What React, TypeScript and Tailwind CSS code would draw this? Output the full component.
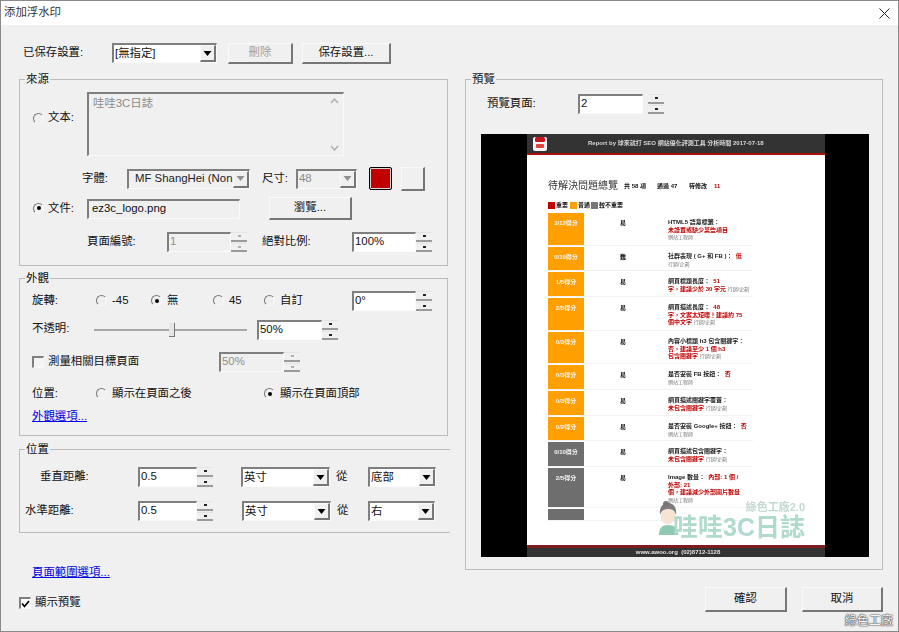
import type { ReactNode } from 'react';

const sunken = 'border-t-2 border-l-2 border-b border-r border-t-[#7f7f7f] border-l-[#7f7f7f] border-b-[#fafafa] border-r-[#fafafa]';
const raised = 'border-t border-l border-b-2 border-r-2 border-t-[#fafafa] border-l-[#fafafa] border-b-[#767676] border-r-[#767676]';

function Arrow({ disabled }: { disabled?: boolean }) {
  return (
    <span className={`flex w-[16px] shrink-0 items-center justify-center self-stretch bg-[#f0f0f0] ${raised}`}>
      <svg width="9" height="5" viewBox="0 0 9 5">
        <path d="M0.5 0h8L4.5 5z" fill={disabled ? '#8f8f8f' : '#000'} />
      </svg>
    </span>
  );
}

function Combo({ value, className, disabled }: { value: string; className: string; disabled?: boolean }) {
  return (
    <div className={`flex h-[20px] shrink-0 items-center overflow-hidden ${sunken} ${disabled ? 'bg-[#f0f0f0]' : 'bg-white'} ${className}`}>
      <span className={`min-w-0 flex-1 overflow-hidden whitespace-nowrap pl-[1px] ${disabled ? 'text-[#8a8a8a]' : ''}`}>{value}</span>
      <Arrow disabled={disabled} />
    </div>
  );
}

function Spinner({ disabled }: { disabled?: boolean }) {
  const tone = disabled ? 'bg-[#b0b0b0]' : 'bg-[#222]';
  return (
    <div className="flex h-[20px] w-[16px] shrink-0 flex-col gap-[1px]">
      <span className="flex flex-1 items-center justify-center border-t border-b-2 border-t-[#e4e4e4] border-b-[#9a9a9a] bg-[#f0f0f0]">
        <i className={`block h-[2px] w-[3px] ${tone}`} />
      </span>
      <span className="flex flex-1 items-center justify-center border-t border-b-2 border-t-[#e4e4e4] border-b-[#9a9a9a] bg-[#f0f0f0]">
        <i className={`block h-[2px] w-[3px] ${tone}`} />
      </span>
    </div>
  );
}

function Spin({ value, className, disabled }: { value: string; className: string; disabled?: boolean }) {
  return (
    <div className={`flex h-[20px] shrink-0 ${className}`}>
      <div className={`min-w-0 flex-1 pl-[1px] leading-[15px] ${sunken} ${disabled ? 'bg-[#f0f0f0] text-[#8f8f8f]' : 'bg-white'}`}>{value}</div>
      <Spinner disabled={disabled} />
    </div>
  );
}

function Btn({ children, className, disabled }: { children: ReactNode; className: string; disabled?: boolean }) {
  return (
    <div className={`flex shrink-0 items-center justify-center bg-[#f0f0f0] ${raised} ${disabled ? 'text-[#a0a0a0]' : ''} ${className}`}>
      {children}
    </div>
  );
}

function Radio({ checked }: { checked?: boolean }) {
  return (
    <span className="flex h-[11px] w-[11px] shrink-0 items-center justify-center rounded-full border border-t-[#777] border-l-[#777] border-b-[#f8f8f8] border-r-[#f8f8f8]">
      {checked && <i className="block h-[4px] w-[4px] rounded-full bg-black" />}
    </span>
  );
}

function Check({ checked }: { checked?: boolean }) {
  return (
    <span className={`flex h-[12px] w-[12px] shrink-0 items-center justify-center ${sunken} ${checked ? 'bg-white' : 'bg-[#f4f4f4]'}`}>
      {checked && (
        <svg width="9" height="8" viewBox="0 0 9 8">
          <path d="M1 3.5l2.5 3L8 1" fill="none" stroke="#000" strokeWidth="1.7" />
        </svg>
      )}
    </span>
  );
}

function Group({ title, className, children }: { title: string; className: string; children: ReactNode }) {
  return (
    <section className={`relative border border-[#bcbcbc] ${className}`}>
      <span className="absolute -top-[8px] left-[5px] bg-[#f0f0f0] px-[1px] leading-[14px]">{title}</span>
      {children}
    </section>
  );
}

type PreviewRow = {
  score: string;
  level: string;
  tone: string;
  height: string;
  lines: ReactNode[];
};

const Red = ({ children }: { children: ReactNode }) => <span className="text-[#c00000]">{children}</span>;
const Role = ({ children }: { children: ReactNode }) => <span className="text-[5px] font-normal text-[#777]">{children}</span>;

const previewRows: PreviewRow[] = [
  { score: '3/12得分', level: '易', tone: 'bg-[#ffa000]', height: 'h-[33px]', lines: ['HTML5 語意標籤：', <Red>未設置或缺少某些項目</Red>, <Role>網站工程師</Role>] },
  { score: '0/10得分', level: '難', tone: 'bg-[#ffa000]', height: 'h-[24px]', lines: [<>社群表現 ( G+ 和 FB )： <Red>&nbsp;低</Red></>, <Role>行銷/企劃</Role>] },
  { score: '1/5得分', level: '易', tone: 'bg-[#ffa000]', height: 'h-[25px]', lines: [<>網頁標題長度： <Red>&nbsp;51</Red></>, <><Red>字，建議少於 30 字元</Red> <Role>行銷/企劃</Role></>] },
  { score: '2/5得分', level: '易', tone: 'bg-[#ffa000]', height: 'h-[33px]', lines: [<>網頁描述長度： <Red>&nbsp;48</Red></>, <Red>字，文案太短嘍！建議約 75</Red>, <><Red>個中文字</Red> <Role>行銷/企劃</Role></>] },
  { score: '0/3得分', level: '易', tone: 'bg-[#ffa000]', height: 'h-[32px]', lines: ['內容小標題 h3 包含關鍵字：', <Red>否，建議至少 1 個 h3</Red>, <><Red>包含關鍵字</Red> <Role>行銷/企劃</Role></>] },
  { score: '0/3得分', level: '易', tone: 'bg-[#ffa000]', height: 'h-[25px]', lines: [<>是否安裝 FB 按鈕： <Red>&nbsp;否</Red></>, <Role>網站工程師</Role>] },
  { score: '0/3得分', level: '易', tone: 'bg-[#ffa000]', height: 'h-[25px]', lines: ['網頁描述關鍵字覆蓋：', <><Red>未包含關鍵字</Red> <Role>行銷/企劃</Role></>] },
  { score: '0/2得分', level: '易', tone: 'bg-[#ffa000]', height: 'h-[24px]', lines: [<>是否安裝 Google+ 按鈕： <Red>&nbsp;否</Red></>, <Role>網站工程師</Role>] },
  { score: '0/10得分', level: '易', tone: 'bg-[#6e6e6e]', height: 'h-[25px]', lines: ['網頁描述包含關鍵字：', <><Red>未包含關鍵字</Red> <Role>行銷/企劃</Role></>] },
  { score: '2/5得分', level: '易', tone: 'bg-[#6e6e6e]', height: 'h-[40px]', lines: [<>Image 數量： <Red>&nbsp;內部: 1 個 /</Red></>, <Red>外部: 21</Red>, <Red>個，建議減少外部圖片數量</Red>, <Role>網站工程師</Role>] },
  { score: '', level: '', tone: 'bg-[#6e6e6e]', height: 'h-[12px]', lines: [] },
];

function PreviewPage() {
  return (
    <div className="relative ml-[46px] flex h-full w-[298px] flex-col bg-white [filter:blur(0.3px)]">
      <div className="flex h-[21px] shrink-0 items-center border-b-2 border-b-[#a80f0f] bg-[#333] pl-[6px]">
        <svg width="14" height="14" viewBox="0 0 14 14" className="shrink-0">
          <rect width="14" height="14" rx="2" fill="#f4f4f4" />
          <rect x="2" y="0" width="10" height="5" rx="1.5" fill="#c8141c" />
          <rect x="3" y="7" width="8" height="4" rx="1" fill="#e8403c" />
        </svg>
        <span className="ml-[41px] whitespace-nowrap text-[6px] font-bold text-[#d8d8d8]">
          Report by 球來就打 SEO 網站優化評測工具 分析時間 2017-07-18
        </span>
      </div>

      <div className="ml-[21px] mt-[23px] flex h-[16px] items-center whitespace-nowrap">
        <span className="text-[10px] leading-none text-[#333]">待解決問題總覽</span>
        <span className="ml-[6px] w-[33px] text-[6px] font-bold">共 58 項</span>
        <span className="w-[32px] text-[6px] font-bold">通過 47</span>
        <span className="text-[6px] font-bold">待修改</span>
        <span className="ml-[7px] text-[6px] font-bold text-[#c00000]">11</span>
      </div>

      <div className="ml-[21px] mt-[7px] flex h-[8px] items-center whitespace-nowrap text-[6px] font-bold leading-none">
        <i className="h-[7px] w-[7px] bg-[#c00000]" />
        <span className="ml-[1px] w-[14px]">重要</span>
        <i className="h-[7px] w-[7px] bg-[#ffa000]" />
        <span className="ml-[1px] w-[13px]">普通</span>
        <i className="h-[7px] w-[7px] bg-[#777]" />
        <span className="ml-[1px]">較不重要</span>
      </div>

      <div className="ml-[21px] mt-[4px] flex w-[205px] flex-col gap-[1px]">
        {previewRows.map((row, i) => (
          <div key={i} className={`flex shrink-0 border-b border-b-[#f2f2f2] text-[6px] leading-[7.5px] ${row.height}`}>
            <div className={`w-[36px] shrink-0 pt-[7px] text-center font-bold text-[#f4f4f4] ${row.tone}`}>{row.score}</div>
            <div className="w-[84px] shrink-0 pl-[36px] pt-[7px] font-bold">{row.level}</div>
            <div className="min-w-0 flex-1 whitespace-nowrap pt-[6px] font-bold text-[#222]">
              {row.lines.map((line, j) => (
                <div key={j}>{line}</div>
              ))}
            </div>
          </div>
        ))}
      </div>

      <div className="mt-auto flex h-[12px] shrink-0 items-center justify-center border-t-[3px] border-t-[#7c1c1c] bg-[#333] pl-[4px] text-[6px] font-bold text-[#e0e0e0]">
        www.awoo.org &nbsp;(02)8712-1128
      </div>

      {/* watermark sits over the page */}
      <div className="absolute left-[130px] top-[367px] flex w-[150px] items-end">
        <svg width="23" height="35" viewBox="0 0 23 35" className="shrink-0">
          <path d="M2 34c0-7 3-10 9-10s10 3 10 10z" fill="#8fc9b4" />
          <ellipse cx="11" cy="15" rx="7.5" ry="8" fill="#f7e3d2" />
          <path d="M3 14C2 6 6 2 11 2c5 0 9 4 8 12-1-4-3-6-8-6-4 0-7 2-8 6z" fill="#7d7d7d" />
          <circle cx="9" cy="3" r="3" fill="#777" />
        </svg>
      </div>
      <div className="absolute left-[157px] top-[368px] flex w-[121px] flex-col items-end whitespace-nowrap leading-none">
        <span className="text-[11px] font-bold text-[#c4d9d0]">綠色工廠2.0</span>
        <span className="mt-[2px] text-[25px] font-bold text-[#b0dacb]">哇哇3C日誌</span>
      </div>
    </div>
  );
}

export default function App() {
  return (
    <div className="relative flex h-[632px] w-[899px] flex-col overflow-hidden border border-[#8a8a8a] bg-[#f0f0f0] font-['Liberation_Sans','Noto_Sans_CJK_TC',sans-serif] text-[11.4px] text-[#111]">
      <header className="flex h-[24px] shrink-0 items-center justify-between bg-white pl-[3px] pr-[8px]">
        <span className="text-[#333]">添加浮水印</span>
        <svg width="11" height="11" viewBox="0 0 11 11">
          <path d="M0.5 0.5l10 10M10.5 0.5l-10 10" stroke="#222" strokeWidth="1" />
        </svg>
      </header>

      <main className="flex min-h-0 flex-1">
        <div className="ml-[18px] w-[431px] shrink-0">
          <div className="mt-[18px] flex h-[20px] items-center">
            <span className="ml-[4px] w-[89px]">已保存設置:</span>
            <Combo value="[無指定]" className="w-[105px]" />
            <Btn disabled className="ml-[11px] h-[21px] w-[65px]">刪除</Btn>
            <Btn className="ml-[9px] h-[21px] w-[89px]">保存設置...</Btn>
          </div>

          <Group title="來源" className="mt-[16px] h-[187px] w-[429px]">
            <div className="mt-[12px] flex h-[64px] items-start pl-[13px]">
              <div className="mt-[18px] flex h-[16px] w-[54px] items-center">
                <Radio />
                <span className="ml-[4px]">文本:</span>
              </div>
              <div className={`relative h-[64px] w-[257px] bg-[#f0f0f0] pl-[4px] pt-[1px] text-[#8a8a8a] ${sunken}`}>
                哇哇3C日誌
                <div className="absolute bottom-[4px] right-[1px] top-[4px] flex w-[15px] flex-col items-center justify-between">
                  <svg width="9" height="6" viewBox="0 0 9 6"><path d="M1 5l3.5-4L8 5" fill="none" stroke="#b0b0b0" strokeWidth="1.5" /></svg>
                  <svg width="9" height="6" viewBox="0 0 9 6"><path d="M1 1l3.5 4L8 1" fill="none" stroke="#b0b0b0" strokeWidth="1.5" /></svg>
                </div>
              </div>
            </div>

            <div className="mt-[11px] flex h-[23px] items-center pl-[62px]">
              <span className="w-[45px]">字體:</span>
              <Combo disabled value="MF ShangHei (Non" className="w-[123px] pl-[5px] [&>span]:text-[#222]" />
              <span className="ml-[12px] w-[34px]">尺寸:</span>
              <Combo disabled value="48" className="w-[61px]" />
              <div className="ml-[12px] h-[23px] w-[23px] rounded-[2px] border border-black bg-[#c00000] shadow-[inset_0_0_0_1px_#d8d8d8]" />
              <Btn className="ml-[9px] h-[24px] w-[24px]">{''}</Btn>
            </div>

            <div className="mt-[7px] flex h-[23px] items-center pl-[13px]">
              <div className="flex w-[54px] items-center">
                <Radio checked />
                <span className="ml-[4px]">文件:</span>
              </div>
              <div className={`h-[20px] w-[153px] pl-[3px] leading-[15px] ${sunken}`}>ez3c_logo.png</div>
              <Btn className="ml-[29px] h-[23px] w-[83px]">瀏覽...</Btn>
            </div>

            <div className="mt-[12px] flex h-[20px] items-center pl-[67px]">
              <span className="w-[80px]">頁面編號:</span>
              <Spin disabled value="1" className="w-[80px]" />
              <span className="ml-[15px] w-[90px]">絕對比例:</span>
              <Spin value="100%" className="w-[80px]" />
            </div>
          </Group>

          <Group title="外觀" className="mt-[12px] h-[158px] w-[429px]">
            <div className="mt-[12px] flex h-[20px] items-center pl-[12px]">
              <span className="w-[64px]">旋轉:</span>
              <div className="flex w-[55px] items-center"><Radio /><span className="ml-[5px]">-45</span></div>
              <div className="flex w-[62px] items-center"><Radio checked /><span className="ml-[5px]">無</span></div>
              <div className="flex w-[51px] items-center"><Radio /><span className="ml-[5px]">45</span></div>
              <div className="flex w-[88px] items-center"><Radio /><span className="ml-[5px]">自訂</span></div>
              <Spin value="0°" className="w-[80px]" />
            </div>

            <div className="mt-[9px] flex h-[20px] items-center pl-[12px]">
              <span className="w-[62px] self-start">不透明:</span>
              <div className="relative flex h-[16px] w-[153px] items-center">
                <i className="block h-[2px] w-full bg-[#a8a8a8]" />
                <i className="absolute left-[75px] top-[1px] block h-[14px] w-[6px] border-b border-r border-b-[#777] border-r-[#777] bg-[#e6e6e6]" />
              </div>
              <Spin value="50%" className="ml-[10px] w-[81px]" />
            </div>

            <div className="mt-[12px] flex h-[20px] items-center pl-[12px]">
              <Check />
              <span className="ml-[4px] w-[171px]">測量相關目標頁面</span>
              <Spin disabled value="50%" className="w-[81px]" />
            </div>

            <div className="mt-[13px] flex h-[18px] items-center pl-[12px]">
              <span className="w-[64px]">位置:</span>
              <div className="flex w-[168px] items-center"><Radio /><span className="ml-[5px]">顯示在頁面之後</span></div>
              <div className="flex items-center"><Radio checked /><span className="ml-[5px]">顯示在頁面頂部</span></div>
            </div>

            <div className="mt-[5px] h-[16px] pl-[12px] leading-[16px] text-[#0000e0] underline">外觀選項...</div>
          </Group>

          <Group title="位置" className="mt-[13px] h-[84px] w-[431px] border-r-0">
            <div className="mt-[17px] flex h-[20px] items-center pl-[20px]">
              <span className="w-[98px]">垂直距離:</span>
              <Spin value="0.5" className="w-[75px]" />
              <Combo value="英寸" className="ml-[28px] w-[89px]" />
              <span className="ml-[6px] w-[32px]">從</span>
              <Combo value="底部" className="w-[68px]" />
            </div>
            <div className="mt-[14px] flex h-[20px] items-center pl-[5px]">
              <span className="w-[113px]">水準距離:</span>
              <Spin value="0.5" className="w-[75px]" />
              <Combo value="英寸" className="ml-[29px] w-[89px]" />
              <span className="ml-[6px] w-[31px]">從</span>
              <Combo value="右" className="w-[67px]" />
            </div>
          </Group>

          <div className="ml-[13px] mt-[31px] h-[16px] leading-[16px] text-[#0000e0] underline">頁面範圍選項...</div>

          <div className="mt-[15px] flex h-[16px] items-center">
            <Check checked />
            <span className="ml-[4px]">顯示預覽</span>
          </div>
        </div>

        <div className="ml-[15px] w-[418px] shrink-0">
          <Group title="預覽" className="mt-[54px] h-[491px] w-[418px]">
            <div className="mt-[14px] flex h-[20px] items-center pl-[21px]">
              <span className="w-[91px]">預覽頁面:</span>
              <div className={`h-[20px] w-[65px] bg-white pl-[1px] leading-[15px] ${sunken}`}>2</div>
              <div className="ml-[5px]"><Spinner /></div>
            </div>
            <div className="ml-[15px] mt-[20px] h-[423px] w-[388px] bg-black">
              <PreviewPage />
            </div>
          </Group>

          <div className="mt-[17px] flex justify-end gap-[15px]">
            <Btn className="h-[25px] w-[82px]">確認</Btn>
            <Btn className="h-[25px] w-[81px]">取消</Btn>
          </div>
        </div>
      </main>

      <span className="absolute bottom-[4px] right-[5px] text-[12px] leading-none text-[#f4f4f4] [text-shadow:0_0_1px_#444,0_0_1px_#444,0_0_2px_#444]">綠色工廠</span>
    </div>
  );
}
